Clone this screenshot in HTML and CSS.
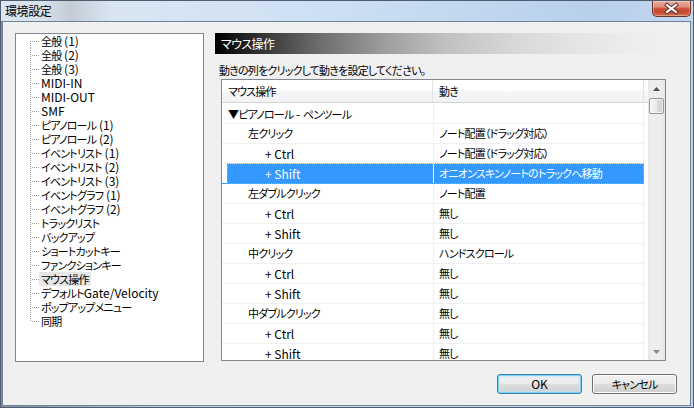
FILE: index.html
```html
<!DOCTYPE html>
<html lang="ja">
<head>
<meta charset="utf-8">
<title>環境設定</title>
<link rel="stylesheet" href="styles.css">
</head>
<body>
<div class="window">
  <div class="titlebar">
    <span class="title">環境設定</span>
    <div class="close">
      <svg width="37" height="15" viewBox="0 0 37 15">
        <path d="M14 4 L23 11 M23 4 L14 11" stroke="#4a2a24" stroke-width="4" stroke-linecap="square" fill="none"/>
        <path d="M14 4 L23 11 M23 4 L14 11" stroke="#ffffff" stroke-width="2.2" stroke-linecap="square" fill="none"/>
      </svg>
    </div>
  </div>
  <div class="client">
    <div class="main">
      <div class="tree">
        <ul>
          <li class="first"><span>全般<i class="en"> (1)</i></span></li>
          <li><span>全般<i class="en"> (2)</i></span></li>
          <li><span>全般<i class="en"> (3)</i></span></li>
          <li><span class="en">MIDI-IN</span></li>
          <li><span class="en">MIDI-OUT</span></li>
          <li><span class="en">SMF</span></li>
          <li><span>ピアノロール<i class="en"> (1)</i></span></li>
          <li><span>ピアノロール<i class="en"> (2)</i></span></li>
          <li><span>イベントリスト<i class="en"> (1)</i></span></li>
          <li><span>イベントリスト<i class="en"> (2)</i></span></li>
          <li><span>イベントリスト<i class="en"> (3)</i></span></li>
          <li><span>イベントグラフ<i class="en"> (1)</i></span></li>
          <li><span>イベントグラフ<i class="en"> (2)</i></span></li>
          <li><span>トラックリスト</span></li>
          <li><span>バックアップ</span></li>
          <li><span>ショートカットキー</span></li>
          <li><span>ファンクションキー</span></li>
          <li class="selected"><span>マウス操作</span></li>
          <li><span>デフォルト<i class="en">Gate/Velocity</i></span></li>
          <li><span>ポップアップメニュー</span></li>
          <li class="last"><span>同期</span></li>
        </ul>
      </div>
      <div class="panel">
        <div class="panel-title">マウス操作</div>
        <div class="hint">動きの列をクリックして動きを設定してください。</div>
        <div class="listview">
          <div class="lv-main">
            <div class="lv-header">
              <div class="h1">マウス操作</div>
              <div class="h2">動き</div>
              <div class="hf"></div>
            </div>
            <div class="lv-rows">
              <div class="row"><div class="c1 l0">▼ピアノロール<i class="en"> - </i>ペンツール</div><div class="c2"></div></div>
              <div class="row"><div class="c1 l1">左クリック</div><div class="c2">ノート配置（ドラッグ対応）</div></div>
              <div class="row"><div class="c1 l2 en">+ Ctrl</div><div class="c2">ノート配置（ドラッグ対応）</div></div>
              <div class="row sel"><div class="c1 l2 en">+ Shift</div><div class="c2">オニオンスキンノートのトラックへ移動</div></div>
              <div class="row"><div class="c1 l1">左ダブルクリック</div><div class="c2">ノート配置</div></div>
              <div class="row"><div class="c1 l2 en">+ Ctrl</div><div class="c2">無し</div></div>
              <div class="row"><div class="c1 l2 en">+ Shift</div><div class="c2">無し</div></div>
              <div class="row"><div class="c1 l1">中クリック</div><div class="c2">ハンドスクロール</div></div>
              <div class="row"><div class="c1 l2 en">+ Ctrl</div><div class="c2">無し</div></div>
              <div class="row"><div class="c1 l2 en">+ Shift</div><div class="c2">無し</div></div>
              <div class="row"><div class="c1 l1">中ダブルクリック</div><div class="c2">無し</div></div>
              <div class="row"><div class="c1 l2 en">+ Ctrl</div><div class="c2">無し</div></div>
              <div class="row"><div class="c1 l2 en">+ Shift</div><div class="c2">無し</div></div>
            </div>
          </div>
          <div class="vscroll">
            <div class="sb-btn">
              <svg width="7" height="4" viewBox="0 0 7 4"><polygon points="0,4 3.5,0 7,4" fill="#4f4f4f"/></svg>
            </div>
            <div class="sb-thumb"></div>
            <div class="sb-track"></div>
            <div class="sb-btn">
              <svg width="7" height="4" viewBox="0 0 7 4"><polygon points="0,0 7,0 3.5,4" fill="#8a8a8a"/></svg>
            </div>
          </div>
        </div>
      </div>
    </div>
    <div class="buttons">
      <div class="btn default en">OK</div>
      <div class="btn">キャンセル</div>
    </div>
  </div>
</div>
</body>
</html>
```

FILE: styles.css
```css
* { box-sizing: border-box; }
html, body { margin: 0; padding: 0; }
body {
  width: 694px;
  height: 408px;
  overflow: hidden;
  font-family: "Noto Sans CJK JP", "Noto Sans", sans-serif;
  font-size: 11px;
  letter-spacing: -0.8px;
  color: #000;
  font-feature-settings: "palt";
  background: #c4d7ed;
}
i { font-style: normal; }
.en {
  font-size: 12px;
  letter-spacing: 0;
}
.window {
  width: 694px;
  height: 408px;
  display: flex;
  flex-direction: column;
  border: 1px solid #4e5d70;
  background: linear-gradient(to right, #7e8ea3 0%, #9aabbf 10%, #c2d5eb 25%, #c6d9ef 60%, #bfd3ea 100%);
}
.titlebar {
  height: 20px;
  display: flex;
  justify-content: space-between;
  align-items: flex-start;
  padding-left: 4px;
  background: linear-gradient(to right, #dde7f2 0%, #d7e1ec 6%, #c4ccd5 10%, #d9e5f2 16%, #d3e3f4 35%, #c6dbf1 60%, #b8d0ec 85%, #c3d7ee 100%);
}
.title {
  line-height: 20px;
  font-size: 12px;
  letter-spacing: -0.4px;
  color: #000;
}
.close {
  width: 39px;
  height: 16px;
  margin-right: 2px;
  border: 1px solid #6a3429;
  border-top: none;
  border-radius: 0 0 5px 5px;
  background: linear-gradient(#eab0a3 0%, #dc8a78 40%, #c94b32 52%, #c64a30 75%, #d8714f 100%);
  box-shadow: inset 0 0 0 1px rgba(255, 255, 255, 0.3);
  display: flex;
  align-items: center;
  justify-content: center;
}
.client {
  flex: 1;
  margin: 0 2px 1px 1px;
  border: 1px solid #6f8298;
  background: #f0f0f0;
  padding: 11px 13px 0 12px;
  display: flex;
  flex-direction: column;
}
.main {
  display: flex;
  height: 329px;
}
.tree {
  width: 189px;
  height: 329px;
  border: 1px solid #828790;
  background: #fff;
  overflow: hidden;
}
.tree ul {
  list-style: none;
  margin: 0;
  padding: 0;
}
.tree li {
  height: 14px;
  line-height: 14px;
  display: flex;
  align-items: center;
  white-space: nowrap;
}
.tree li::before {
  content: "";
  flex: none;
  width: 23px;
  height: 14px;
  background:
    repeating-linear-gradient(to right, #a0a0a0 0 1px, transparent 1px 2px) 16px 7px / 7px 1px no-repeat,
    repeating-linear-gradient(to bottom, #a0a0a0 0 1px, transparent 1px 2px) 14px 0 / 1px 14px no-repeat;
}
.tree li.first::before {
  background:
    repeating-linear-gradient(to right, #a0a0a0 0 1px, transparent 1px 2px) 16px 7px / 7px 1px no-repeat,
    repeating-linear-gradient(to bottom, #a0a0a0 0 1px, transparent 1px 2px) 14px 7px / 1px 7px no-repeat;
}
.tree li.last::before {
  background:
    repeating-linear-gradient(to right, #a0a0a0 0 1px, transparent 1px 2px) 16px 7px / 7px 1px no-repeat,
    repeating-linear-gradient(to bottom, #a0a0a0 0 1px, transparent 1px 2px) 14px 0 / 1px 8px no-repeat;
}
.tree li span {
  padding: 0 2px;
  height: 14px;
  line-height: 14px;
}
.tree li.selected span {
  background: #e6e6e6;
}
.panel {
  width: 462px;
  margin-left: 11px;
  display: flex;
  flex-direction: column;
}
.panel-title {
  height: 21px;
  line-height: 21px;
  padding-left: 6px;
  font-size: 12px;
  letter-spacing: -0.6px;
  color: #fff;
  background: linear-gradient(to right, #000 0%, #2e2e2e 9%, #6a6a6a 22%, #9e9e9e 37%, #c1c1c1 50%, #d8d8d8 65%, #e6e6e6 80%, #eeeeee 92%, #f0f0f0 100%);
}
.hint {
  margin-top: 8px;
  height: 17px;
  line-height: 17px;
  padding-left: 4px;
}
.listview {
  margin-left: 6px;
  width: 445px;
  height: 282px;
  border: 1px solid #828790;
  background: #fff;
  display: flex;
}
.lv-main {
  width: 426px;
  overflow: hidden;
}
.lv-header {
  height: 23px;
  display: flex;
  border-bottom: 1px solid #d5d5d5;
  background: linear-gradient(#ffffff 0%, #ffffff 45%, #f5f6f7 55%, #f1f2f4 100%);
}
.lv-header div {
  line-height: 22px;
  white-space: nowrap;
}
.h1 {
  width: 211px;
  padding-left: 6px;
  border-right: 1px solid #e3e4e6;
}
.h2 {
  width: 211px;
  padding-left: 6px;
  border-right: 1px solid #e3e4e6;
}
.hf { flex: 1; }
.lv-rows { padding-top: 1px; }
.row {
  position: relative;
  display: flex;
  width: 422px;
  height: 20px;
  border-bottom: 1px solid #f0f0f0;
}
.row div {
  line-height: 19px;
  white-space: nowrap;
  overflow: hidden;
}
.c1 { width: 211px; }
.c2 {
  width: 211px;
  padding-left: 5px;
  border-left: 1px solid #f0f0f0;
  border-right: 1px solid #f0f0f0;
}
.l0 { padding-left: 6px; }
.l1 { padding-left: 26px; }
.l2 { padding-left: 43px; }
.row.sel {
  color: #fff;
  border-bottom-color: #3399ff;
}
.row.sel .c1 {
  background: linear-gradient(to right, transparent 5px, #3399ff 5px);
}
.row.sel .c2 {
  background: #3399ff;
  border-left-color: #ffffff;
  border-right-color: #3399ff;
}
.row.sel::after {
  content: "";
  position: absolute;
  top: -1px;
  left: 5px;
  right: 0;
  bottom: -1px;
  border: 1px dotted #f2a04a;
}
.vscroll {
  width: 17px;
  display: flex;
  flex-direction: column;
  background: linear-gradient(to right, #e6e6e6 0%, #eeeeee 20%, #ececec 80%, #e4e4e4 100%);
}
.sb-btn {
  height: 17px;
  display: flex;
  align-items: center;
  justify-content: center;
}
.sb-thumb {
  height: 16px;
  margin: 1px 1px 0 1px;
  border: 1px solid #989898;
  border-radius: 2px;
  background: linear-gradient(to right, #f5f5f5 0%, #eaeaea 50%, #dadada 51%, #d2d2d2 100%);
  box-shadow: inset 0 0 0 1px rgba(255, 255, 255, 0.6);
}
.sb-track { flex: 1; }
.buttons {
  margin-top: 12px;
  display: flex;
  justify-content: flex-end;
  gap: 10px;
}
.btn {
  width: 85px;
  height: 20px;
  line-height: 18px;
  text-align: center;
  border: 1px solid #707070;
  border-radius: 3px;
  background: linear-gradient(#f2f2f2 0%, #ebebeb 50%, #dddddd 51%, #cfcfcf 100%);
  box-shadow: inset 0 0 0 1px #fbfbfb;
}
.btn.default {
  border-color: #3c7fb1;
  box-shadow: inset 0 0 0 1px #7fd1f4, inset 0 0 2px 2px rgba(190, 232, 250, 0.7);
}
```
